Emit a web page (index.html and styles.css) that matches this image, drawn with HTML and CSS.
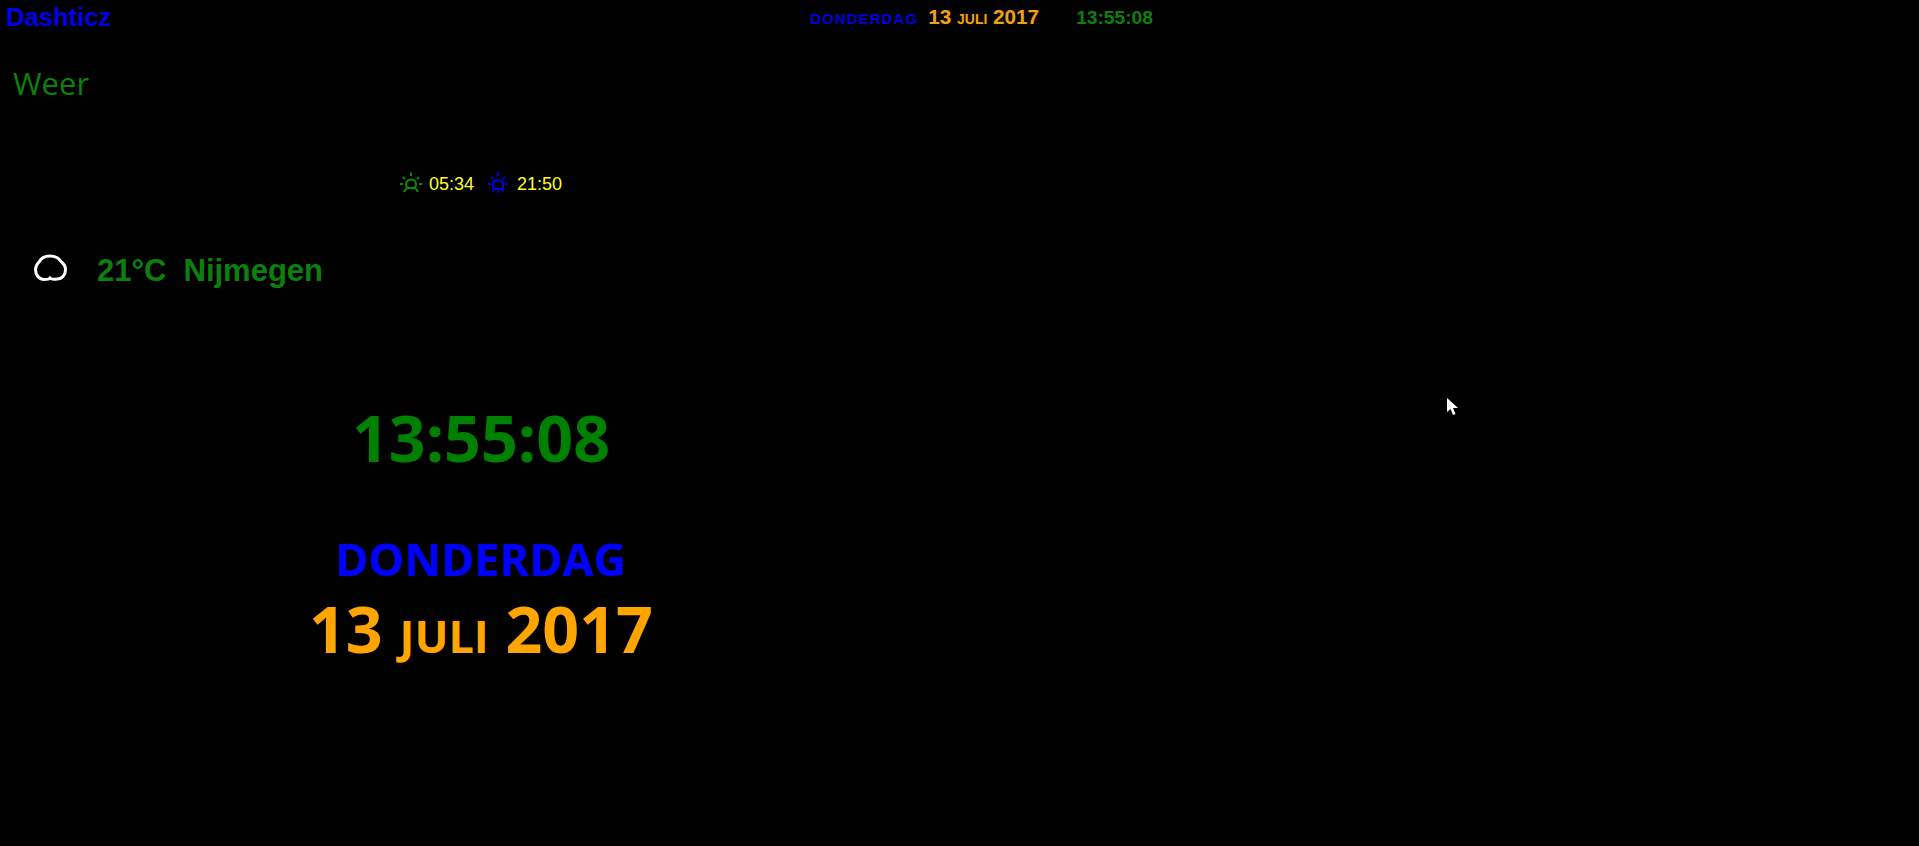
FILE: index.html
```html
<!DOCTYPE html>
<html lang="nl">
<head>
<meta charset="utf-8">
<title>Dashticz</title>
<link rel="stylesheet" href="styles.css">
</head>
<body>
<header class="topbar">
  <div class="brand">Dashticz</div>
  <div class="top-date">
    <span class="top-day">donderdag</span>
    <span class="top-full">13 juli 2017</span>
    <span class="top-time">13:55:08</span>
  </div>
</header>
<main class="content">
  <h2 class="section-title">Weer</h2>
  <div class="sun-row">
    <svg class="sun green" viewBox="0 0 24 24"><path d="M11 0.500v3.500M3 5l2 2M19 5l-2 2M0 12h3M19 12h3.500M7.500 16a5 5 0 1 1 7 0M4 20c1.500-3 3-4 4-4h6c1 0 2.500 1 4 4"/></svg>
    <span class="sun-time first">05:34</span>
    <svg class="sun blue" viewBox="0 0 24 24"><path d="M10 0.500v3.500M3 5l2 2M17 5l-2 2M0 12h3M17 12h3M6.500 17a5.200 5.200 0 1 1 7 0M6.500 17h7M6.500 17l-2 2.500M13.500 17l2 2.500M10 19v2"/></svg>
    <span class="sun-time">21:50</span>
  </div>
  <div class="weather">
    <svg class="cloud" viewBox="0 0 34 28"><path d="M16 24C15 25.500 13 25.500 10 25.500C5 25.500 1.500 21 1.500 15.500C1.500 11.500 3 10 5 8C7 4 11 2 16 2C21 2 25 4 27.500 8C30 10 31.500 11.500 31.500 15.500C31.500 21 28 25 23 25C20 25.500 17.500 25.500 16 24z"/></svg>
    <span class="weather-text">21°C&nbsp; Nijmegen</span>
  </div>
  <div class="clock">
    <div class="clock-time">13:55:08</div>
    <div class="clock-day">donderdag</div>
    <div class="clock-date">13 juli 2017</div>
  </div>
</main>
<svg class="cursor" viewBox="0 0 12 18"><path d="M0 0v14l3.500-3 2.500 6 2.500-1-2.500-6h5z"/></svg>
</body>
</html>
```

FILE: styles.css
```css
* { box-sizing: border-box; }
html, body { margin: 0; height: 100%; }
body {
  background: #000;
  overflow: hidden;
  font-family: "Liberation Sans", Arial, sans-serif;
}
.topbar {
  display: flex;
  align-items: center;
  height: 33px;
}
.brand {
  width: 810px;
  margin-top: 2px;
  padding-left: 6px;
  color: #0000e6;
  font-size: 25.6px;
  font-weight: 700;
}
.top-date {
  display: flex;
  align-items: baseline;
  font-weight: 700;
  font-variant: small-caps;
}
.top-day { color: #0000d8; font-size: 21px; letter-spacing: 1.1px; margin-right: 10px; }
.top-full { color: #f5a00f; font-size: 20.7px; margin-right: 37px; }
.top-time { color: #0d800d; font-size: 19.2px; }
.content { padding: 0; }
.section-title {
  margin: 30px 0 0 13px;
  color: #0c800c;
  font-family: "Open Sans", sans-serif;
  font-size: 31px;
  font-weight: 400;
  line-height: 41px;
}
.sun-row {
  display: flex;
  align-items: center;
  height: 24px;
  margin: 68px 0 0 400px;
}
.sun {
  width: 24px;
  height: 24px;
  fill: none;
  stroke-width: 2;
}
.green { stroke: #0a8a0a; }
.blue { stroke: #0000f0; }
.sun-time {
  margin-left: 5px;
  color: #ffff1e;
  font-size: 18px;
  font-weight: 400;
}
.first { margin-right: 14px; }
.weather {
  display: flex;
  align-items: center;
  height: 40px;
  margin: 55px 0 0 34px;
}
.cloud {
  width: 34px;
  height: 28px;
  margin-bottom: 6px;
  fill: none;
  stroke: #fff;
  stroke-width: 3;
}
.weather-text {
  margin-left: 29px;
  color: #0c800c;
  font-size: 31px;
  font-weight: 700;
}
.clock {
  width: 962px;
  margin-top: 103px;
  font-family: "Open Sans", sans-serif;
  font-weight: 700;
  font-size: 64.5px;
  text-align: center;
  font-variant: small-caps;
}
.clock-time { color: #008000; line-height: 87px; }
.clock-day { margin-top: 39px; color: #0000ff; line-height: 62px; }
.clock-date { margin-top: 8px; color: #ffa500; line-height: 76px; }
.cursor {
  position: absolute;
  left: 1447px;
  top: 398px;
  width: 12px;
  height: 18px;
  fill: #fff;
}
```
